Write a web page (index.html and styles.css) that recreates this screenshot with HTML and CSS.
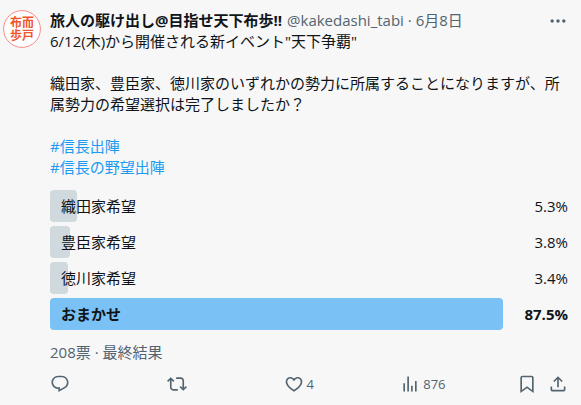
FILE: index.html
```html
<!DOCTYPE html>
<html lang="ja">

<head>
    <meta charset="UTF-8">
    <meta name="viewport" content="width=device-width, initial-scale=1.0">
    <title>旅人の駆け出し@目指せ天下布歩!!</title>
    <link rel="stylesheet" href="styles.css">
</head>

<body>
    <article class="post">
        <a href="#" class="avatar" aria-label="@kakedashi_tabi">
            <svg viewBox="0 0 38 38">
                <circle cx="19" cy="19" r="18.4" />
                <text x="7" y="17">布而</text>
                <text x="7" y="30">歩戸</text>
            </svg>
        </a>

        <div class="content">
            <header class="post-header">
                <a href="#" class="name">旅人の駆け出し@目指せ天下布歩!!</a>
                <span class="meta"><a href="#">@kakedashi_tabi</a> · <a href="#">6月8日</a></span>
                <button type="button" class="more" aria-label="もっと見る">
                    <svg class="icon" viewBox="0 0 24 24"><path d="M3 12c0-1.1.9-2 2-2s2 .9 2 2-.9 2-2 2-2-.9-2-2zm9 2c1.1 0 2-.9 2-2s-.9-2-2-2-2 .9-2 2 .9 2 2 2zm7 0c1.1 0 2-.9 2-2s-.9-2-2-2-2 .9-2 2 .9 2 2 2z" /></svg>
                </button>
            </header>

            <div class="text">
                <p>6/12(木)から開催される新イベント"天下争覇"</p>
                <p>織田家、豊臣家、徳川家のいずれかの勢力に所属することになりますが、所属勢力の希望選択は完了しましたか？</p>
                <p><a href="#">#信長出陣</a><br><a href="#">#信長の野望出陣</a></p>
            </div>

            <!-- Poll results -->
            <ul class="poll">
                <li class="choice">
                    <div class="bar" style="width: 5.3%"></div>
                    <span>織田家希望</span>
                    <span>5.3%</span>
                </li>
                <li class="choice">
                    <div class="bar" style="width: 3.8%"></div>
                    <span>豊臣家希望</span>
                    <span>3.8%</span>
                </li>
                <li class="choice">
                    <div class="bar" style="width: 3.4%"></div>
                    <span>徳川家希望</span>
                    <span>3.4%</span>
                </li>
                <li class="choice winner">
                    <div class="bar" style="width: 87.5%"></div>
                    <span>おまかせ</span>
                    <span>87.5%</span>
                </li>
            </ul>
            <p class="poll-info">208票 · 最終結果</p>

            <footer class="actions">
                <div class="action">
                    <button type="button" aria-label="返信">
                        <svg class="icon" viewBox="0 0 24 24"><path d="M1.751 10c0-4.42 3.584-8 8.005-8h4.366c4.49 0 8.129 3.64 8.129 8.13 0 2.96-1.607 5.68-4.196 7.11l-8.054 4.46v-3.69h-.067c-4.49.1-8.183-3.51-8.183-8.01zm8.005-6c-3.317 0-6.005 2.69-6.005 6 0 3.37 2.77 6.08 6.138 6.01l.351-.01h1.761v2.3l5.087-2.81c1.951-1.08 3.163-3.13 3.163-5.36 0-3.39-2.744-6.13-6.129-6.13H9.756z" /></svg>
                    </button>
                </div>
                <div class="action">
                    <button type="button" aria-label="リポスト">
                        <svg class="icon" viewBox="0 0 24 24"><path d="M4.5 3.88l4.432 4.14-1.364 1.46L5.5 7.55V16c0 1.1.896 2 2 2H13v2H7.5c-2.209 0-4-1.79-4-4V7.55L1.432 9.48.068 8.02 4.5 3.88zM16.5 6H11V4h5.5c2.209 0 4 1.79 4 4v8.45l2.068-1.93 1.364 1.46-4.432 4.14-4.432-4.14 1.364-1.46 2.068 1.93V8c0-1.1-.896-2-2-2z" /></svg>
                    </button>
                </div>
                <div class="action">
                    <button type="button" aria-label="いいね">
                        <svg class="icon" viewBox="0 0 24 24"><path d="M16.697 5.5c-1.222-.06-2.679.51-3.89 2.16l-.805 1.09-.806-1.09C9.984 6.01 8.526 5.44 7.304 5.5c-1.243.07-2.349.78-2.91 1.91-.552 1.12-.633 2.78.479 4.82 1.074 1.97 3.257 4.27 7.129 6.61 3.87-2.34 6.052-4.64 7.126-6.61 1.111-2.04 1.03-3.7.477-4.82-.561-1.13-1.666-1.84-2.908-1.91zm4.187 7.69c-1.351 2.48-4.001 5.12-8.379 7.67l-.503.3-.504-.3c-4.379-2.55-7.029-5.19-8.382-7.67-1.36-2.5-1.41-4.86-.514-6.67.887-1.79 2.647-2.91 4.601-3.01 1.651-.09 3.368.56 4.798 2.01 1.429-1.45 3.146-2.1 4.796-2.01 1.954.1 3.714 1.22 4.601 3.01.896 1.81.846 4.17-.514 6.67z" /></svg>
                        <span>4</span>
                    </button>
                </div>
                <div class="action">
                    <button type="button" aria-label="表示">
                        <svg class="icon" viewBox="0 0 24 24"><path d="M8.75 21V3h2v18h-2zM18 21V8.5h2V21h-2zM4 21l.004-10h2L6 21H4zm9.248 0v-7h2v7h-2z" /></svg>
                        <span>876</span>
                    </button>
                </div>
                <div class="tools">
                    <button type="button" aria-label="ブックマーク">
                        <svg class="icon" viewBox="0 0 24 24"><path d="M4 4.5C4 3.12 5.119 2 6.5 2h11C18.881 2 20 3.12 20 4.5v18.44l-8-5.71-8 5.71V4.5zM6.5 4c-.276 0-.5.22-.5.5v14.56l6-4.29 6 4.29V4.5c0-.28-.224-.5-.5-.5h-11z" /></svg>
                    </button>
                    <button type="button" aria-label="共有">
                        <svg class="icon" viewBox="0 0 24 24"><path d="M12 2.59l5.7 5.7-1.41 1.42L13 6.41V16h-2V6.41l-3.3 3.3-1.41-1.42L12 2.59zM21 15l-.02 3.51c0 1.38-1.12 2.49-2.5 2.49H5.5C4.11 21 3 19.88 3 18.5V15h2v3.5c0 .28.22.5.5.5h12.98c.28 0 .5-.22.5-.5L19 15h2z" /></svg>
                    </button>
                </div>
            </footer>
        </div>
    </article>
</body>

</html>
```
FILE: styles.css
```css
* {
    padding: 0;
    margin: 0;
    box-sizing: border-box;
}

body {
    font-family: "Open Sans", "Noto Sans CJK JP", sans-serif;
    font-size: 15px;
    line-height: 21px;
    color: #0f1419;
    background-color: #f7f7f7;
}

a {
    color: inherit;
    text-decoration: none;
}

button {
    display: flex;
    align-items: center;
    gap: 3px;
    border: none;
    background: none;
    color: inherit;
    font: inherit;
    cursor: pointer;
}

.icon {
    display: block;
    width: 20px;
    height: 20px;
    fill: currentColor;
}

.post {
    display: flex;
    gap: 9px;
    padding: 10px 13px 10px 3px;
}

/* Seal avatar */
.avatar {
    flex: none;
    width: 38px;
    height: 38px;
}

.avatar svg {
    display: block;
}

.avatar circle {
    fill: #fff;
    stroke: #f58a8a;
}

.avatar text {
    font-family: "Noto Sans CJK JP", sans-serif;
    font-size: 12px;
    font-weight: bold;
    fill: #f2542d;
}

.content {
    flex: 1;
    min-width: 0;
}

.post-header {
    display: flex;
    align-items: center;
    gap: 5px;
    white-space: nowrap;
}

.name {
    font-weight: bold;
}

.meta {
    flex: 1;
    color: #536471;
}

.more {
    color: #536471;
}

.text p {
    margin-bottom: 21px;
}

.text p:last-child {
    margin-bottom: 12px;
}

.text p a {
    color: #1d9bf0;
}

/* Poll */
.poll {
    display: grid;
    gap: 4px;
    list-style: none;
}

.choice {
    position: relative;
    display: flex;
    justify-content: space-between;
    align-items: center;
    height: 32px;
    padding-left: 11px;
}

.choice span {
    position: relative;
}

.bar {
    position: absolute;
    top: 0;
    left: 0;
    height: 100%;
    border-radius: 4px;
    background-color: #cfd9de;
}

.winner {
    font-weight: bold;
}

.winner .bar {
    background-color: #7ac1f5;
}

.poll-info {
    margin-top: 12px;
    color: #536471;
}

/* Action buttons */
.actions {
    display: flex;
    margin-top: 11px;
    font-size: 13px;
    line-height: 20px;
    color: #536471;
}

.action {
    flex: 1;
}

.tools {
    display: flex;
    gap: 11px;
}
```
